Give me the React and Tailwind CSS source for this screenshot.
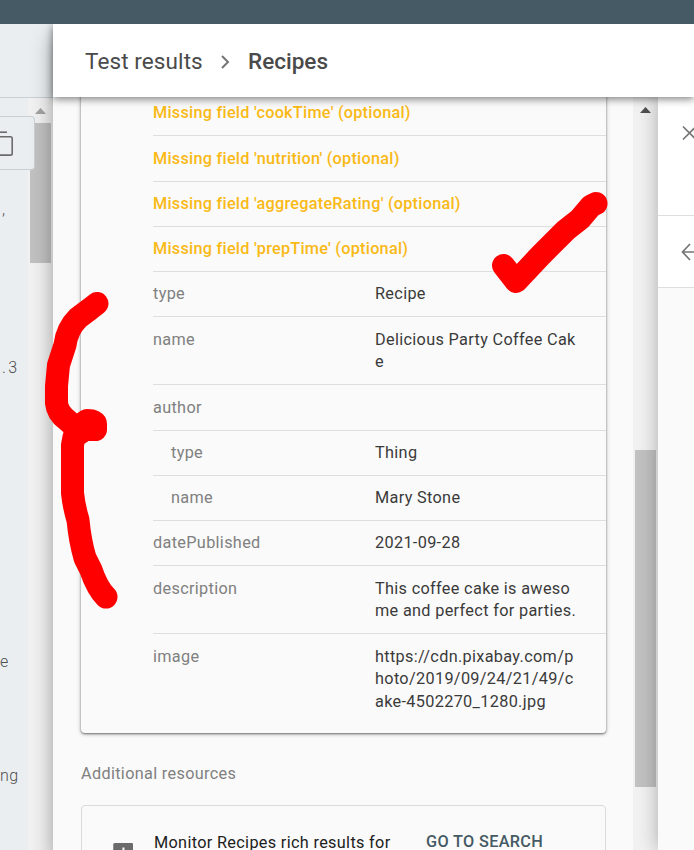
import React from "react";

const warnings = [
  ["Missing field 'cookTime' (optional)", "h-[47px] pt-[13px]"],
  ["Missing field 'nutrition' (optional)", "h-[46px] pt-[12px]"],
  ["Missing field 'aggregateRating' (optional)", "h-[45px] pt-[11px]"],
  ["Missing field 'prepTime' (optional)", "h-[45px] pt-[10.500px]"],
];

const fields = [
  { label: "type", lines: ["Recipe"], size: "h-[45px] pt-[11px]" },
  { label: "name", lines: ["Delicious Party Coffee Cak", "e"], size: "h-[68px] pt-[12px]" },
  { label: "author", lines: [], size: "h-[46px] pt-[12px]" },
  { label: "type", lines: ["Thing"], size: "h-[45px] pt-[11px]", nested: true },
  { label: "name", lines: ["Mary Stone"], size: "h-[45px] pt-[11px]", nested: true },
  { label: "datePublished", lines: ["2021-09-28"], size: "h-[45px] pt-[11px]" },
  { label: "description", lines: ["This coffee cake is aweso", "me and perfect for parties."], size: "h-[68px] pt-[12px]" },
  {
    label: "image",
    lines: ["https://cdn.pixabay.com/p", "hoto/2019/09/24/21/49/c", "ake-4502270_1280.jpg"],
    size: "h-[99px] pt-[12px] border-b-0",
  },
];

function CodePane() {
  return (
    <aside className="relative flex w-[53px] shrink-0 flex-col overflow-hidden bg-[#eaeef1]">
      <div className="h-[74px] shrink-0 border-b border-[#c9d0d4]" />
      <div className="flex flex-1">
        <div className="relative z-10 w-7 font-['Roboto','Liberation_Mono',monospace] text-[16px] leading-5 text-[#4d4d4d]">
          <div className="mt-[18px] flex h-[54px] w-[35px] items-center rounded-r-sm border border-l-0 border-[#c9d0d4] bg-[#eaeef1]">
            <svg width="14" height="28" viewBox="0 0 14 28" fill="none" stroke="#6b6b6b" strokeWidth="1.6">
              <path d="M0 3.2H7" />
              <path d="M0 7.7H10.5Q12.2 7.7 12.2 9.4V24.4Q12.2 26.1 10.5 26.1H0" />
            </svg>
          </div>
          <div className="mt-[30px] pl-[2px] font-light">,</div>
          <div className="mt-[138px] pl-[2px] font-light tracking-[2.4px]">.3</div>
          <div className="mt-[274px] font-light">e</div>
          <div className="mt-[94px] font-light tracking-[0.5px]">ng</div>
        </div>
        <div className="flex w-[25px] flex-col items-center bg-[#f1f1f1] pr-px">
          <svg className="mt-[10px] ml-[1px]" width="11" height="6" viewBox="0 0 11 6">
            <path d="M0 6L5.5 0L11 6Z" fill="#a3a3a3" />
          </svg>
          <div className="mt-[9px] ml-px h-[140px] w-[21px] bg-[#c1c1c1]" />
        </div>
      </div>
    </aside>
  );
}

function Row({ label, lines, size, nested }) {
  return (
    <div className={`flex border-b border-[#dedede] leading-[22.25px] ${size}`}>
      <div className={`w-[222px] shrink-0 text-[#808080] ${nested ? "pl-[18px]" : ""}`}>{label}</div>
      <div className="whitespace-nowrap text-[#3a3a3a]">
        {lines.map((line) => (
          <div key={line}>{line}</div>
        ))}
      </div>
    </div>
  );
}

function Results() {
  return (
    <section className="w-[580px] shrink-0 overflow-hidden pl-7 text-[16.25px] tracking-[0.33px]">
      <div className="-mt-2 h-[644px] w-[525px] rounded-sm pl-[72px] shadow-[0_1px_4px_rgba(0,0,0,0.3),0_1px_2px_rgba(0,0,0,0.4)]">
        {warnings.map(([text, size]) => (
          <div key={text} className={`border-b border-[#dedede] leading-[22.25px] font-medium tracking-[0.25px] text-[#f9b916] ${size}`}>
            {text}
          </div>
        ))}
        {fields.map((field, i) => (
          <Row key={i} {...field} />
        ))}
      </div>
      <h2 className="mt-[30px] leading-[22px] text-[#808080]">Additional resources</h2>
      <div className="mt-[20px] flex h-[100px] w-[525px] rounded-sm border border-[#dadada]">
        <svg className="mt-[37px] ml-[30.500px] shrink-0" width="20.500" height="22" viewBox="0 0 20 22">
          <path fill="#6b6b6b" d="M1.5 0H18.5Q20 0 20 1.5V22H0V1.5Q0 0 1.5 0Z" />
          <path fill="#fafafa" d="M9.2 4.5h2v4h4v2h-4v4h-2v-4h-4v-2h4z" />
        </svg>
        <div className="mt-[25px] ml-[21px] w-[272px] whitespace-nowrap text-[#212121]">Monitor Recipes rich results for</div>
        <div className="mt-[24px] font-medium whitespace-nowrap tracking-[0.35px] text-[#455a64]">GO TO SEARCH</div>
      </div>
    </section>
  );
}

function ResultsScrollbar() {
  return (
    <div className="flex w-[25px] shrink-0 flex-col items-center bg-[#f1f1f1]">
      <svg className="mt-[10px]" width="11" height="6" viewBox="0 0 11 6">
        <path d="M0 6L5.5 0L11 6Z" fill="#505050" />
      </svg>
      <div className="mt-[337px] h-[337px] w-[21px] bg-[#c1c1c1]" />
    </div>
  );
}

function SidePanel() {
  return (
    <aside className="relative w-9 shrink-0 bg-[#fafafa] shadow-[0_0_20px_rgba(0,0,0,0.3)]">
      <div className="h-[119px] overflow-hidden border-b border-[#dedede] bg-white pt-7 pl-6">
        <svg width="16" height="16" viewBox="0 0 16 16" fill="none" stroke="#757575" strokeWidth="1.7">
          <path d="M1 1.5L14 14.5M14 1.5L1 14.5" />
        </svg>
      </div>
      <div className="h-[72px] overflow-hidden border-b border-[#dedede] bg-white pt-[27px] pl-[23px]">
        <svg width="18" height="18" viewBox="0 0 18 18" fill="none" stroke="#757575" strokeWidth="1.7">
          <path d="M9 1L1.5 9L9 17M1.5 9H18" />
        </svg>
      </div>
    </aside>
  );
}

export default function App() {
  return (
    <div className="relative flex h-[850px] w-[694px] flex-col overflow-hidden bg-[#eaeef1] font-['Roboto',sans-serif]">
      <div className="h-6 shrink-0 bg-[#455a64]" />
      <div className="flex h-[826px] overflow-hidden">
        <CodePane />
        <main className="relative z-20 flex w-[641px] flex-col bg-[#fafafa] shadow-[0_12px_20px_rgba(0,0,0,0.36)]">
          <header className="relative z-10 flex h-[73px] shrink-0 items-center bg-white pt-[3px] pl-8 text-[22.5px] text-[#4a4a4a] shadow-[0_2px_8px_rgba(0,0,0,0.5)]">
            <span className="w-[117px] whitespace-nowrap tracking-[0.1px]">Test results</span>
            <svg className="ml-[19px]" width="9" height="14" viewBox="0 0 9 14" fill="none" stroke="#757575" strokeWidth="2">
              <path d="M1 1L7 7L1 13" />
            </svg>
            <span className="ml-[18px] font-medium">Recipes</span>
          </header>
          <div className="flex flex-1 overflow-hidden">
            <Results />
            <ResultsScrollbar />
            <SidePanel />
          </div>
        </main>
      </div>
      <svg className="pointer-events-none absolute inset-0 z-30" width="694" height="850" viewBox="0 0 694 850" fill="none" stroke="#ff0000" strokeWidth="23" strokeLinecap="round" strokeLinejoin="round">
        <path d="M503.500 265.500L516 281.500L540 256L566 230L580 219L591 206L596 203.500" />
        <path d="M97 303.500L90 309L78 318Q67 329 65 345L58.500 365L56.500 386V403Q57.500 413 67 420L76 428L87 420.500Q96 420.500 95.500 425V429.500H85L74 437L72.500 445V493Q74 507 78 520Q80 541 85 558L91 570Q97 588 106 597" />
      </svg>
    </div>
  );
}
